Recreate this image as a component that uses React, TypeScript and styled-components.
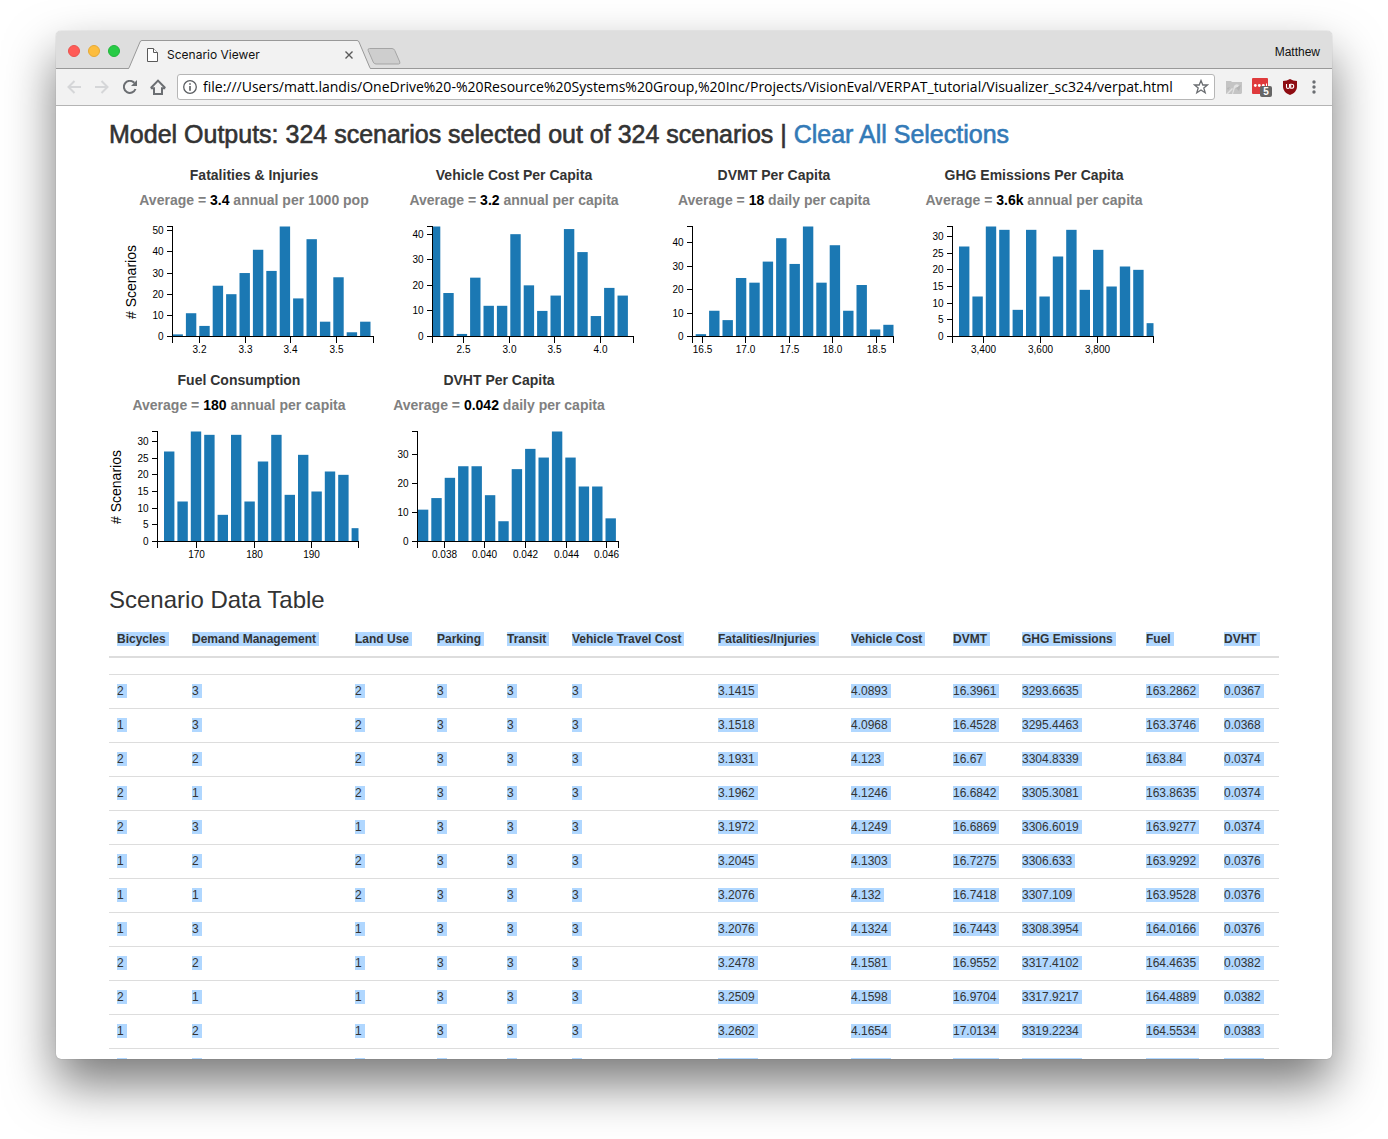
import React from "react";
import styled, { createGlobalStyle } from "styled-components";

const GlobalStyle = createGlobalStyle`
  *, *::before, *::after { box-sizing: border-box; }
  body {
    margin: 0;
    background: #fff;
    color: #333;
    font: 14px/20px "Liberation Sans", Arial, sans-serif;
  }
`;

const Desktop = styled.div`
  display: flex;
  height: 100vh;
  padding: 31px 56px 80px;
  overflow: hidden;
`;

const BrowserWindow = styled.div`
  flex: 1;
  min-width: 0;
  display: flex;
  flex-direction: column;
  overflow: hidden;
  background: #fff;
  border-radius: 5px;
  box-shadow: 0 0 1px rgba(0, 0, 0, 0.4), 0 25px 50px rgba(0, 0, 0, 0.53);
`;

const TabStrip = styled.header`
  flex: none;
  display: flex;
  align-items: flex-end;
  height: 38px;
  background: #dedede;
  box-shadow: inset 0 -1px #999;
  font: 12px/16px Inter, Roboto, sans-serif;
  color: #111;
`;

const Lights = styled.div`
  display: flex;
  align-self: center;
  gap: 8px;
  padding: 2px 8px 0 12px;
`;

const Light = styled.button<{ $fill: string; $edge: string }>`
  width: 12px;
  height: 12px;
  padding: 0;
  border: 1px solid ${(p) => p.$edge};
  border-radius: 50%;
  background: ${(p) => p.$fill};
`;

const Tab = styled.div`
  display: flex;
  height: 29px;
`;

const TabBody = styled.div`
  display: flex;
  align-items: center;
  gap: 9px;
  width: 215px;
  padding: 0 4px 0 5px;
  border-top: 1px solid #999;
  background: #f2f2f2;
`;

const TabTitle = styled.span`
  flex: 1;
`;

const PlainButton = styled.button`
  display: flex;
  align-items: center;
  justify-content: center;
  padding: 0;
  border: 0;
  background: none;
`;

const NewTab = styled(PlainButton)`
  align-self: center;
  padding-top: 13px;
  margin-left: -4px;
`;

const Profile = styled(PlainButton)`
  align-self: center;
  margin-left: auto;
  padding: 4px 12px 0 0;
  font: 12px/16px "Liberation Sans", Arial, sans-serif;
  color: inherit;
`;

const Toolbar = styled.nav`
  flex: none;
  display: flex;
  align-items: center;
  height: 37px;
  padding: 0 8px 0 4px;
  background: #f2f2f2;
  border-bottom: 1px solid #b4b4b4;
`;

const ToolButton = styled(PlainButton)<{ $w?: number }>`
  flex: none;
  width: ${(p) => p.$w ?? 28}px;
  height: 28px;
`;

const AddressBar = styled.div`
  flex: 1;
  min-width: 0;
  display: flex;
  align-items: center;
  height: 26px;
  margin: 0 5px;
  padding: 0 5px;
  gap: 6px;
  background: #fff;
  border: 1px solid #b6b6b6;
  border-radius: 3px;
`;

const AddressInput = styled.input`
  flex: 1;
  min-width: 0;
  padding: 0;
  border: 0;
  outline: 0;
  background: none;
  color: #000;
  font: 14px/20px "Open Sans", Roboto, sans-serif;
`;

const Viewport = styled.main`
  flex: 1;
  min-height: 0;
  overflow: hidden;
  padding: 15px 53px 0;
`;

const OutputsHeading = styled.h3`
  margin: 0 0 18px;
  font-size: 25px;
  line-height: 26px;
  font-weight: 400;
  -webkit-text-stroke: 0.6px;
`;

const TableHeading = styled.h3`
  margin: 12px 0 10px;
  font-size: 24px;
  line-height: 26px;
  font-weight: 400;
`;

const ClearLink = styled.a`
  color: #337ab7;
  text-decoration: none;
`;

const ChartRow = styled.section<{ $indent?: boolean }>`
  display: flex;
  padding-left: ${(p) => (p.$indent ? 15 : 0)}px;
`;

const ChartCell = styled.figure`
  width: 260px;
  margin: 0 0 10px;
  text-align: center;
`;

const ChartTitle = styled.figcaption`
  margin-bottom: 5px;
  font-weight: 700;
`;

const Average = styled.div`
  color: #808080;
  font-weight: 700;

  b { color: #000; }
`;

const Plot = styled.svg`
  display: block;
  overflow: visible;
  font: 10px "Liberation Sans", Arial, sans-serif;

  rect { fill: #1b78b3; }
  path { fill: none; stroke: #000; shape-rendering: crispEdges; }
  text { fill: #000; }
  .axis-name { font-size: 14px; }
`;

const Table = styled.table`
  width: 100%;
  border-collapse: collapse;
  font-size: 12px;
  line-height: 17px;
  text-align: left;

  th { padding: 8px; border-bottom: 2px solid #ddd; }
  td { padding: 8px; border-top: 1px solid #ddd; }
`;

const Selected = styled.span`
  padding-right: 3px;
  background: #b0d7ff;
`;

type ChartData = {
  title: string;
  average: string;
  unit: string;
  max: number;
  start: number;
  bars: number[];
  yTicks: number[];
  xTicks: [number, string][];
};

const fuelBars = [27, 12, 33, 32, 8, 32, 12, 24, 32, 14, 26, 15, 21, 20, 4];
const byFive = [0, 5, 10, 15, 20, 25, 30];

const topCharts: ChartData[] = [
  {
    title: "Fatalities & Injuries", average: "3.4", unit: "annual per 1000 pop",
    max: 52, start: 0,
    bars: [1, 11, 5, 24, 20, 30, 41, 31, 52, 18, 46, 7, 28, 2, 7],
    yTicks: [0, 10, 20, 30, 40, 50],
    xTicks: [[27, "3.2"], [73, "3.3"], [118, "3.4"], [164, "3.5"]],
  },
  {
    title: "Vehicle Cost Per Capita", average: "3.2", unit: "annual per capita",
    max: 43, start: -2.6,
    bars: [43, 17, 1, 23, 12, 12, 40, 20, 10, 16, 42, 33, 8, 19, 16],
    yTicks: [0, 10, 20, 30, 40],
    xTicks: [[31, "2.5"], [77, "3.0"], [122, "3.5"], [168, "4.0"]],
  },
  {
    title: "DVMT Per Capita", average: "18", unit: "daily per capita",
    max: 47, start: 3.2,
    bars: [1, 11, 7, 25, 23, 32, 42, 31, 47, 23, 39, 11, 22, 3, 5],
    yTicks: [0, 10, 20, 30, 40],
    xTicks: [[10, "16.5"], [53, "17.0"], [97, "17.5"], [140, "18.0"], [184, "18.5"]],
  },
  {
    title: "GHG Emissions Per Capita", average: "3.6k", unit: "annual per capita",
    max: 33, start: 6.5, bars: fuelBars, yTicks: byFive,
    xTicks: [[31, "3,400"], [88, "3,600"], [145, "3,800"]],
  },
];

const bottomCharts: ChartData[] = [
  {
    title: "Fuel Consumption", average: "180", unit: "annual per capita",
    max: 33, start: 6.5, bars: fuelBars, yTicks: byFive,
    xTicks: [[39, "170"], [97, "180"], [154, "190"]],
  },
  {
    title: "DVHT Per Capita", average: "0.042", unit: "daily per capita",
    max: 38, start: 0.4,
    bars: [11, 15, 22, 26, 26, 16, 7, 25, 32, 29, 38, 29, 19, 19, 8],
    yTicks: [0, 10, 20, 30],
    xTicks: [[27, "0.038"], [67, "0.040"], [108, "0.042"], [149, "0.044"], [189, "0.046"]],
  },
];

const PLOT_W = 201;
const PLOT_H = 110;
const BAR_STEP = 13.4;
const BAR_W = 10.4;

function Histogram({ data, named }: { data: ChartData; named?: boolean }) {
  const y = (v: number) => Math.round(PLOT_H - (v / data.max) * PLOT_H);
  return (
    <ChartCell>
      <ChartTitle>{data.title}</ChartTitle>
      <Average>
        Average = <b>{data.average}</b> {data.unit}
      </Average>
      <Plot width="260" height="150" role="img" aria-label={data.title}>
        {named && (
          <text className="axis-name" textAnchor="middle" transform="translate(12 72) rotate(-90)">
            # Scenarios
          </text>
        )}
        <g transform="translate(48.5 16.5)">
          {data.bars.map((v, i) => {
            const left = data.start + i * BAR_STEP;
            const x0 = Math.max(0, left);
            const x1 = Math.min(PLOT_W, left + BAR_W);
            const h = (v / data.max) * PLOT_H;
            return <rect key={i} x={x0} y={PLOT_H - h} width={x1 - x0} height={h} />;
          })}
          <path d={`M-6,0H0V${PLOT_H}H-6M0,${PLOT_H + 6}V${PLOT_H}H${PLOT_W}V${PLOT_H + 6}`} />
          {data.yTicks.map((t) => (
            <g key={t}>
              <path d={`M-6,${y(t)}H0`} />
              <text x="-9" y={y(t) + 3} textAnchor="end">{t}</text>
            </g>
          ))}
          {data.xTicks.map(([x, label]) => (
            <g key={label}>
              <path d={`M${x},${PLOT_H}v6`} />
              <text x={x} y={PLOT_H + 16} textAnchor="middle">{label}</text>
            </g>
          ))}
        </g>
      </Plot>
    </ChartCell>
  );
}

const columns: [string, number][] = [
  ["Bicycles", 75], ["Demand Management", 163], ["Land Use", 82], ["Parking", 70],
  ["Transit", 65], ["Vehicle Travel Cost", 146], ["Fatalities/Injuries", 133],
  ["Vehicle Cost", 102], ["DVMT", 69], ["GHG Emissions", 124], ["Fuel", 78], ["DVHT", 63],
];

const scenarios = [
  "2 3 2 3 3 3 3.1415 4.0893 16.3961 3293.6635 163.2862 0.0367",
  "1 3 2 3 3 3 3.1518 4.0968 16.4528 3295.4463 163.3746 0.0368",
  "2 2 2 3 3 3 3.1931 4.123 16.67 3304.8339 163.84 0.0374",
  "2 1 2 3 3 3 3.1962 4.1246 16.6842 3305.3081 163.8635 0.0374",
  "2 3 1 3 3 3 3.1972 4.1249 16.6869 3306.6019 163.9277 0.0374",
  "1 2 2 3 3 3 3.2045 4.1303 16.7275 3306.633 163.9292 0.0376",
  "1 1 2 3 3 3 3.2076 4.132 16.7418 3307.109 163.9528 0.0376",
  "1 3 1 3 3 3 3.2076 4.1324 16.7443 3308.3954 164.0166 0.0376",
  "2 2 1 3 3 3 3.2478 4.1581 16.9552 3317.4102 164.4635 0.0382",
  "2 1 1 3 3 3 3.2509 4.1598 16.9704 3317.9217 164.4889 0.0382",
  "1 2 1 3 3 3 3.2602 4.1654 17.0134 3319.2234 164.5534 0.0383",
].map((line) => line.split(" "));

// Blank lengths, in spaces, for the row that is only entering the viewport.
const nextRow = [2, 2, 2, 2, 2, 2, 11, 11, 13, 17, 15, 11];

export default function App() {
  return (
    <>
      <GlobalStyle />
      <Desktop>
        <BrowserWindow>
          <TabStrip>
            <Lights>
              <Light $fill="#ff5b57" $edge="#e9534e" aria-label="Close window" />
              <Light $fill="#fdbd3e" $edge="#e6a935" aria-label="Minimize window" />
              <Light $fill="#27cb45" $edge="#22b53c" aria-label="Zoom window" />
            </Lights>
            <Tab>
              <svg width="14" height="29" aria-hidden="true">
                <path d="M0,29 L1,28.500 L12,2 Q12.500,.5 14,.5 V29Z" fill="#f2f2f2" />
                <path d="M0,28.500 Q.8,28.500 1.200,27.500 L12,2 Q12.500,.5 14,.5" fill="none" stroke="#999" />
              </svg>
              <TabBody>
                <svg width="11" height="14" fill="#fff" stroke="#5a5a5a" aria-hidden="true">
                  <path d="M.5,.5H6.500L10.500,4.500V13.500H.5Z" />
                  <path d="M6.500,.5V4.500H10.500" />
                </svg>
                <TabTitle>Scenario Viewer</TabTitle>
                <PlainButton aria-label="Close tab">
                  <svg width="8" height="8" stroke="#5a5a5a" strokeWidth="1.4">
                    <path d="M.5,.5L7.500,7.500M7.500,.5L.5,7.500" />
                  </svg>
                </PlainButton>
              </TabBody>
              <svg width="14" height="29" aria-hidden="true">
                <path d="M14,29 L13,28.500 L2,2 Q1.500,.5 0,.5 V29Z" fill="#f2f2f2" />
                <path d="M14,28.500 Q13.200,28.500 12.800,27.500 L2,2 Q1.500,.5 0,.5" fill="none" stroke="#999" />
              </svg>
            </Tab>
            <NewTab aria-label="New tab">
              <svg width="34" height="17">
                <path d="M2.500,.5H25Q27,.5 27.800,2.500L32.800,14Q33.500,16 31.500,16H9Q7,16 6.200,14L1.200,2.500Q.5,.5 2.500,.5Z" fill="#cecece" stroke="#a5a5a5" />
              </svg>
            </NewTab>
            <Profile>Matthew</Profile>
          </TabStrip>

          <Toolbar>
            <ToolButton aria-label="Back">
              <svg width="14" height="14" fill="none" stroke="#d5d6d8" strokeWidth="2">
                <path d="M14,7H1.500M7.500,1L1.500,7L7.500,13" />
              </svg>
            </ToolButton>
            <ToolButton aria-label="Forward">
              <svg width="14" height="14" fill="none" stroke="#d5d6d8" strokeWidth="2">
                <path d="M0,7H12.500M6.500,1L12.500,7L6.500,13" />
              </svg>
            </ToolButton>
            <ToolButton aria-label="Reload">
              <svg width="14" height="14">
                <path d="M12.500,9A6,6 0 1 1 11.300,2.800" fill="none" stroke="#6b6e72" strokeWidth="2" />
                <path d="M14,0V6H8Z" fill="#6b6e72" />
              </svg>
            </ToolButton>
            <ToolButton aria-label="Home">
              <svg width="16" height="16" fill="none" stroke="#6b6e72" strokeWidth="2">
                <path d="M.8,9.200H4V15H12V9.200H15.200" />
                <path d="M.8,9L8,1.600L15.200,9" />
              </svg>
            </ToolButton>
            <AddressBar>
              <svg width="14" height="14" aria-hidden="true">
                <circle cx="7" cy="7" r="6.300" fill="none" stroke="#5a5d61" strokeWidth="1.300" />
                <path d="M6.200,6H7.800V10.800H6.200ZM6.200,3.200H7.800V4.800H6.200Z" fill="#5a5d61" />
              </svg>
              <AddressInput
                aria-label="Address"
                readOnly
                value="file:///Users/matt.landis/OneDrive%20-%20Resource%20Systems%20Group,%20Inc/Projects/VisionEval/VERPAT_tutorial/Visualizer_sc324/verpat.html"
              />
              <PlainButton aria-label="Bookmark this page">
                <svg width="16" height="16" fill="none" stroke="#6b6e72" strokeWidth="1.300">
                  <path d="M8,1.500L9.800,6H14.500L10.800,9L12.200,13.800L8,11L3.800,13.800L5.200,9L1.500,6H6.200Z" />
                </svg>
              </PlainButton>
            </AddressBar>
            <ToolButton aria-label="Pictures extension">
              <svg width="16" height="16">
                <path d="M0,2H5L6,3H16V14L15,15H0Z" fill="#c4c4c4" />
                <path d="M0,15L6,9L7,10L2,15ZM8,7Q10,4 13,6L12,8L9,9L7,15H6Z" fill="#e2e2e2" />
                <path d="M10,9L15,6L13,12ZM1,9L4,8L2,11Z" fill="#b4b4b4" />
              </svg>
            </ToolButton>
            <ToolButton aria-label="Password extension, 5 items">
              <svg width="20" height="20">
                <rect x="0" y="1" width="16" height="16" rx="1" fill="#df3a3c" />
                <circle cx="3.300" cy="8.500" r="1.400" fill="#fff" />
                <circle cx="7.300" cy="8.500" r="1.400" fill="#fff" />
                <circle cx="11.300" cy="8.500" r="1.400" fill="#fff" />
                <path d="M14.500,6.500V10" stroke="#fff" />
                <rect x="8" y="9" width="12" height="11" rx="2" fill="#666" />
                <text x="14" y="18" textAnchor="middle" fontFamily="Liberation Sans, sans-serif" fontWeight="700" fontSize="10" fill="#fff">5</text>
              </svg>
            </ToolButton>
            <ToolButton aria-label="Content blocker extension">
              <svg width="14" height="16">
                <path d="M7,0Q10,2 14,2V8Q14,13 7,16Q0,13 0,8V2Q4,2 7,0Z" fill="#8e0c12" />
                <path d="M3.500,5V8Q3.500,9.500 5,9.500T6.500,8V5M7.700,5.200V9.300H8.500Q10.700,9.300 10.700,7.200T8.500,5.200Z" fill="none" stroke="#fff" strokeWidth="1.100" />
              </svg>
            </ToolButton>
            <ToolButton $w={20} aria-label="Browser menu">
              <svg width="4" height="14" fill="#6b6e72">
                <circle cx="2" cy="2" r="1.700" />
                <circle cx="2" cy="7" r="1.700" />
                <circle cx="2" cy="12" r="1.700" />
              </svg>
            </ToolButton>
          </Toolbar>

          <Viewport>
            <OutputsHeading>
              Model Outputs: 324 scenarios selected out of 324 scenarios |{" "}
              <ClearLink href="#">Clear All Selections</ClearLink>
            </OutputsHeading>
            <ChartRow $indent>
              {topCharts.map((c, i) => (
                <Histogram key={c.title} data={c} named={i === 0} />
              ))}
            </ChartRow>
            <ChartRow>
              {bottomCharts.map((c, i) => (
                <Histogram key={c.title} data={c} named={i === 0} />
              ))}
            </ChartRow>
            <TableHeading>Scenario Data Table</TableHeading>
            <Table>
              <colgroup>
                {columns.map(([name, w]) => (
                  <col key={name} width={w} />
                ))}
              </colgroup>
              <thead>
                <tr>
                  {columns.map(([name]) => (
                    <th key={name} scope="col"><Selected>{name}</Selected></th>
                  ))}
                </tr>
              </thead>
              <tbody>
                <tr><td colSpan={12} /></tr>
                {scenarios.map((row, i) => (
                  <tr key={i}>
                    {row.map((value, j) => (
                      <td key={j}><Selected>{value}</Selected></td>
                    ))}
                  </tr>
                ))}
                <tr>
                  {nextRow.map((length, j) => (
                    <td key={j}><Selected>{"\u00a0".repeat(length)}</Selected></td>
                  ))}
                </tr>
              </tbody>
            </Table>
          </Viewport>
        </BrowserWindow>
      </Desktop>
    </>
  );
}
